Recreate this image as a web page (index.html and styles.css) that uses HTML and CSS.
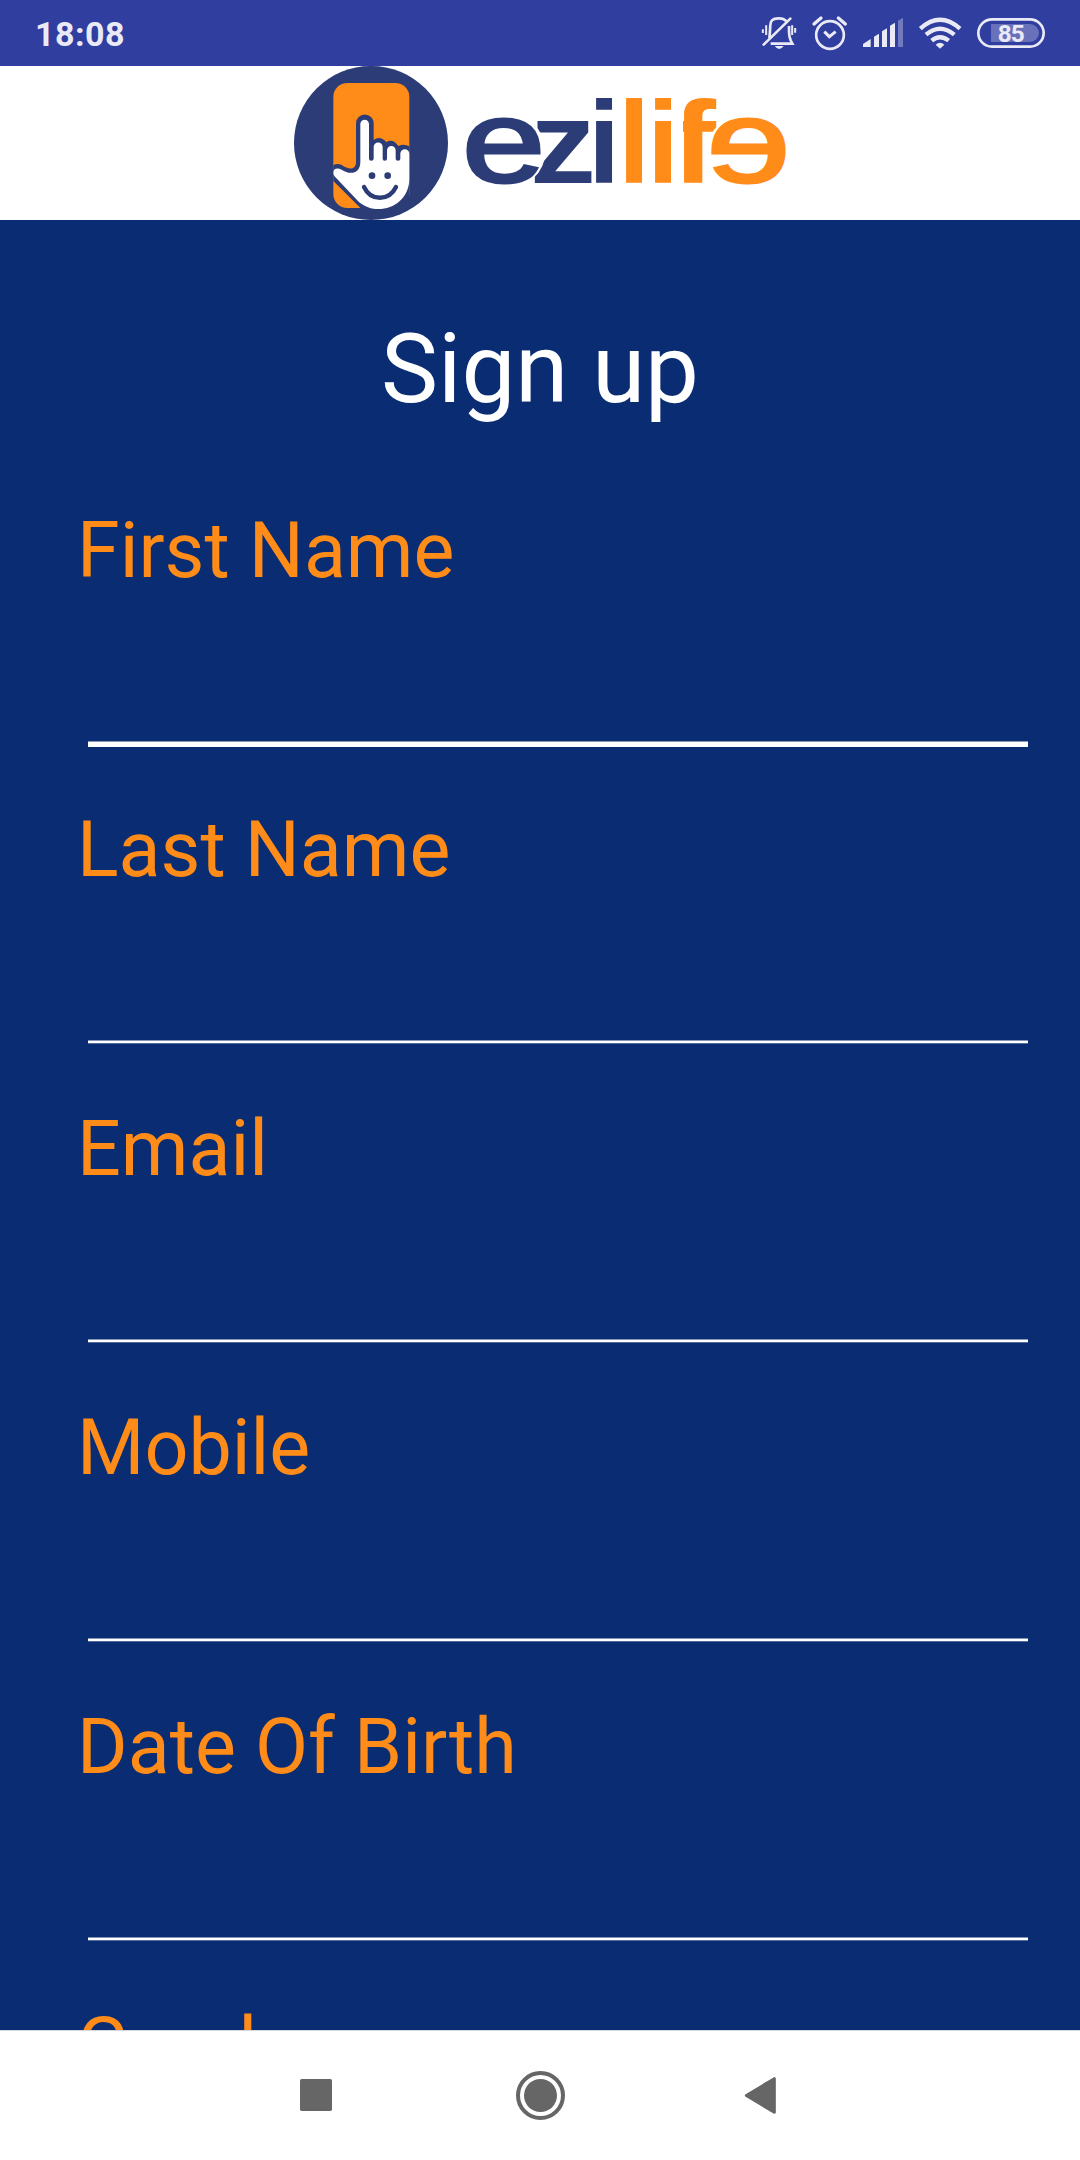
FILE: index.html
```html
<!DOCTYPE html>
<html lang="en">
<head>
  <meta charset="UTF-8" />
  <meta name="viewport" content="width=device-width, initial-scale=1.0" />
  <title>Sign up | ezilife</title>
  <link rel="stylesheet" href="styles.css">
</head>
<body>
  <div class="status-bar">
    <span class="clock">18:08</span>
    <svg class="status-icons" viewBox="0 0 1020 198" fill="none" stroke="#eaeaf6" stroke-width="8">
      <!-- muted bell -->
      <path d="M88 114C94 76 82 55 117 55C130 55 136 59 141 66M147 78C148 98 143 108 157 131H92" />
      <path d="M71 134L151 56" stroke-linecap="round" />
      <path d="M68.500 88V99M78.500 76V105M156.500 76V105M165.500 84V98" stroke-width="6" />
      <path d="M104 138H131Q118 156 104 138Z" fill="#eaeaf6" stroke="none" />
      <!-- alarm -->
      <circle cx="270" cy="105" r="41.500" />
      <path d="M253 95L268 110L287 95" stroke-width="9" />
      <path d="M222 72L243 54M295 54L316 72" stroke-width="10" stroke-linecap="round" />
      <!-- signal -->
      <g fill="#eaeaf6" stroke="none">
        <path d="M369 141V132L392 117V141Z" />
        <path d="M402 141V110L417 101V141Z" />
        <path d="M426 141V94L441 85V141Z" />
        <path d="M450 141V77L465 68V141Z" />
        <path d="M474 141V62L489 53V141Z" opacity=".35" />
      </g>
      <!-- wifi -->
      <path d="M541 86Q600 33 660 86M558 104Q600 68 643 104M575 122Q600 101 626 122" stroke-width="13" />
      <path d="M587 134Q600 122 613 134L600 146Z" fill="#eaeaf6" stroke="none" />
      <!-- battery -->
      <rect x="715" y="58" width="196" height="82" rx="41" />
      <path d="M753 72H870A27 27 0 0 1 870 126H753Z" fill="#6a71bb" stroke="none" />
      <text class="battery-level" x="812" y="125">85</text>
    </svg>
  </div>

  <header class="logo-bar">
    <svg class="logo" viewBox="0 0 520 154">
      <g transform="translate(0 -6) scale(.33333)">
        <circle cx="273" cy="249" r="231" fill="#2b3c76" />
        <rect x="160" y="69" width="228" height="375" rx="42" fill="#ff8c18" />
        <path d="M160 340V315C168 311 178 311 185 315C205 328 225 332 228 308V190A26 26 0 0 1 281 190V240Q300 226 319 246Q339 234 355 258Q372 250 388 259V445H242L160 363Z" fill="#2b3c76" />
        <path d="M160 338C160 325 172 322 185 329C210 346 241 341 241 305V192A13 13 0 0 1 267 192V296Q267 302 274 302Q281 302 281 296V261A13 13 0 0 1 308 261V296Q308 302 314 302Q321 302 321 296V271A13 13 0 0 1 347 271V296Q347 302 354 302Q361 302 361 296V281A13 13 0 0 1 388 281V356C388 438 292 474 236 425L165 350Q160 345 160 338Z" fill="#fff" />
        <circle cx="276" cy="347" r="10" fill="#2b3c76" />
        <circle cx="323" cy="347" r="10" fill="#2b3c76" />
        <path d="M252 381C272 424 327 424 348 381" fill="none" stroke="#2b3c76" stroke-width="13" stroke-linecap="round" />
      </g>
      <!-- round cut-outs that keep both e's clear of their neighbours -->
      <mask id="cut-z" maskUnits="userSpaceOnUse" x="0" y="0" width="520" height="154">
        <rect x="240" y="0" width="80" height="154" fill="#fff" />
        <ellipse cx="223.500" cy="85" rx="42" ry="39" fill="#000" />
      </mask>
      <mask id="cut-f" maskUnits="userSpaceOnUse" x="0" y="0" width="520" height="154">
        <rect x="403" y="0" width="60" height="154" fill="#fff" />
        <ellipse cx="468.500" cy="85" rx="42" ry="37" fill="#000" />
      </mask>
      <g class="wordmark navy">
        <text class="round" transform="translate(182 115.5) scale(1.29 1)">e</text>
        <g mask="url(#cut-z)"><text transform="translate(249.5 116.5) scale(1.15 1)">z</text></g>
        <text x="308" y="116.500">i</text>
      </g>
      <g class="wordmark orange">
        <text x="338" y="116.500">l</text>
        <text x="367" y="116.500">i</text>
        <g mask="url(#cut-f)"><text transform="translate(391.5 116.5) scale(1.15 1)">f</text></g>
        <text class="round" transform="translate(510 115.5) scale(-1.29 1)">e</text>
      </g>
    </svg>
  </header>

  <main class="signup">
    <h1 class="page-title">Sign up</h1>
    <form class="fields">
      <label class="field active"><span>First Name</span><input type="text"></label>
      <label class="field"><span>Last Name</span><input type="text"></label>
      <label class="field"><span>Email</span><input type="email"></label>
      <label class="field"><span>Mobile</span><input type="tel"></label>
      <label class="field"><span>Date Of Birth</span><input type="text"></label>
      <label class="field"><span>Gender</span><input type="text"></label>
    </form>
  </main>

  <nav class="nav-bar">
    <svg viewBox="0 0 1560 330" fill="#666">
      <rect x="60" y="117" width="96" height="96" rx="5" />
      <circle cx="781.500" cy="166.500" r="49.500" />
      <circle cx="781.500" cy="166.500" r="67.500" fill="none" stroke="#666" stroke-width="12" />
      <path d="M1399 166.500L1483 116V217Z" stroke="#666" stroke-width="9" stroke-linejoin="round" />
    </svg>
  </nav>
</body>
</html>
```

FILE: styles.css
```css
*,*::before,*::after{box-sizing:border-box;margin:0;padding:0;}
body{
  font-family: Roboto, sans-serif;
  background:#0a2c72;
  width:1080px;
  height:2160px;
  display:flex;
  flex-direction:column;
  overflow:hidden;
}
.status-bar{
  flex:none;
  height:66px;
  background:#303e9f;
  color:#eaeaf6;
  display:flex;
  justify-content:space-between;
}
.clock{
  padding-left:35px;
  font-size:34px;
  font-weight:700;
  line-height:68px;
  letter-spacing:.5px;
}
.status-icons{width:340px;height:66px;}
.battery-level{
  font-size:73px;
  font-weight:700;
  text-anchor:middle;
  letter-spacing:-3px;
  fill:#eaeaf6;
  stroke:none;
}
.logo-bar{
  flex:none;
  height:154px;
  background:#fff;
  display:flex;
  justify-content:center;
}
.logo{width:520px;height:154px;}
.wordmark{
  font-family:"Liberation Sans", Arial, sans-serif;
  font-weight:700;
  font-size:116px;
}
.navy{fill:#2b3c76;stroke:#2b3c76;stroke-width:0;}
.orange{fill:#ff8c18;stroke:#ff8c18;stroke-width:0;}
.round{
  font-weight:400;
  stroke-width:3px;
}
.signup{
  flex:1;
  min-height:0;
  overflow:hidden;
  padding:93px 52px 0 77px;
}
.page-title{
  color:#fff;
  font-size:96px;
  font-weight:400;
  line-height:112px;
  text-align:center;
  margin-right:25px;
}
.fields{margin-top:81px;}
.field{
  display:flex;
  flex-direction:column;
  height:299px;
  color:#ff8c18;
  font-size:77.2px;
  line-height:90px;
}
.field input{
  height:148px;
  margin-left:11px;
  background:none;
  border:0;
  border-bottom:2px solid #fff;
  box-shadow:inset 0 -1px rgba(255,255,255,.5), 0 1px rgba(255,255,255,.3);
  color:#fff;
  font:inherit;
  outline:0;
}
.field.active input{
  height:151px;
  border-bottom-width:5px;
  box-shadow:inset 0 -1px rgba(255,255,255,.5);
}
.nav-bar{
  flex:none;
  height:130px;
  background:#fff;
  border-top:1px solid #d5d8df;
  display:flex;
  justify-content:center;
  padding-top:9px;
}
.nav-bar svg{width:520px;height:110px;}
```
